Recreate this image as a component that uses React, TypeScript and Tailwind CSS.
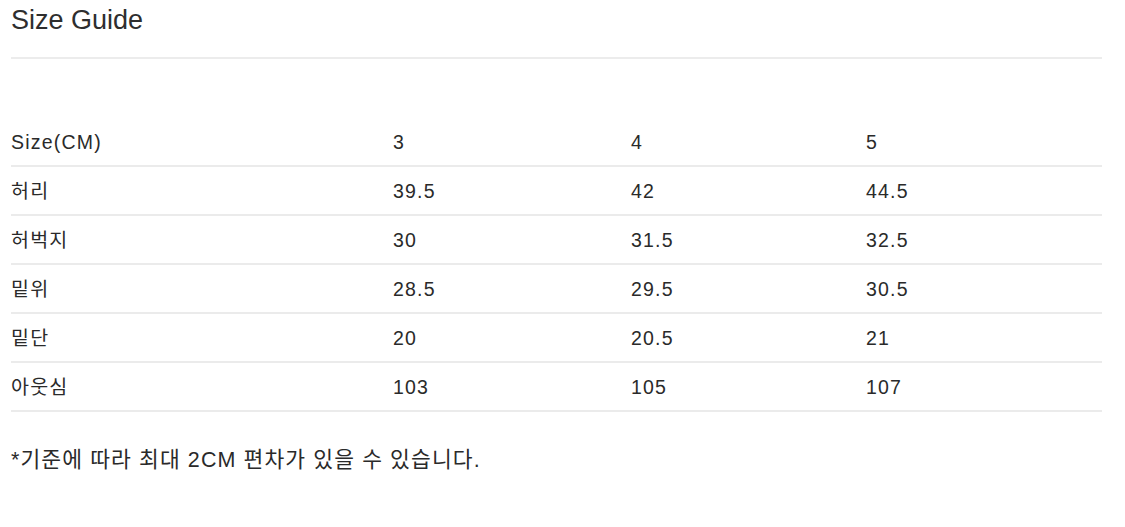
import React from "react";

const rows: string[][] = [
  ["Size(CM)", "3", "4", "5"],
  ["허리", "39.5", "42", "44.5"],
  ["허벅지", "30", "31.5", "32.5"],
  ["밑위", "28.5", "29.5", "30.5"],
  ["밑단", "20", "20.5", "21"],
  ["아웃심", "103", "105", "107"],
];

export default function App() {
  return (
    <div
      className="w-[1125px] h-[527px] bg-white text-[#333] pl-[11px] pt-[4px]"
      style={{ fontFamily: '"Liberation Sans", "Noto Sans CJK KR", sans-serif' }}
    >
      <div className="w-[1091px]">
        <h1 className="text-[27px] leading-[32px] font-normal text-[#2e2e2e]">Size Guide</h1>
        <div className="mt-[21px] h-[2px] bg-[#ececec]" />
        <div className="mt-[59px]">
          {rows.map((r, i) => (
            <div
              key={i}
              className="grid grid-cols-[382px_238px_235px_236px] h-[49px] items-center border-b-2 border-[#ebebeb] text-[19.5px] tracking-[1.2px] text-[#2a2a2a]"
            >
              {r.map((c, j) => (
                <div key={j} className="leading-[24px]">
                  {c}
                </div>
              ))}
            </div>
          ))}
        </div>
        <p className="mt-[35px] text-[21.5px] leading-[26px] tracking-[1.1px] text-[#2a2a2a]">
          *기준에 따라 최대 2CM 편차가 있을 수 있습니다.
        </p>
      </div>
    </div>
  );
}
